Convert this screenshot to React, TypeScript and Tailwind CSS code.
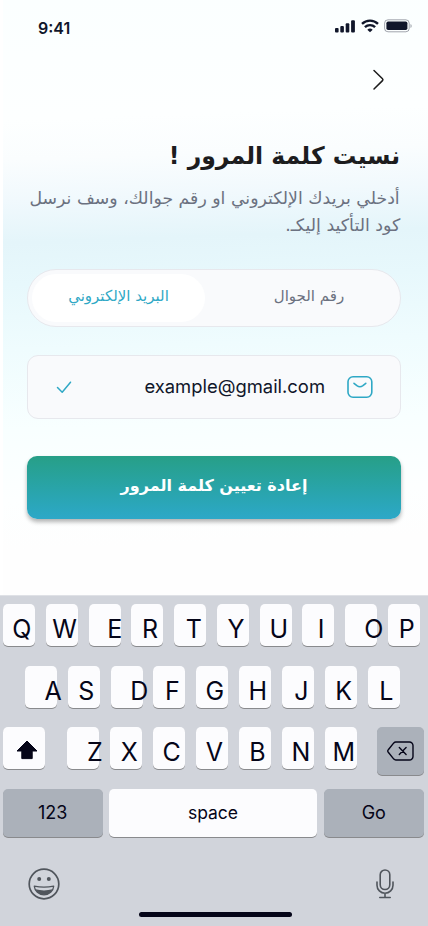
import React from "react";

type KeyDef = { label: string; inset: number };

const ROW_ONE: KeyDef[] = [
  { label: "Q", inset: 9.2 },
  { label: "W", inset: 6.5 },
  { label: "E", inset: 18.7 },
  { label: "R", inset: 10.7 },
  { label: "T", inset: 11.7 },
  { label: "Y", inset: 10.7 },
  { label: "U", inset: 10 },
  { label: "I", inset: 15.4 },
  { label: "O", inset: 19.2 },
  { label: "P", inset: 10.9 },
];

const ROW_TWO: KeyDef[] = [
  { label: "A", inset: 19.4 },
  { label: "S", inset: 10.5 },
  { label: "D", inset: 19.5 },
  { label: "F", inset: 11.5 },
  { label: "G", inset: 9.3 },
  { label: "H", inset: 9.5 },
  { label: "J", inset: 12.4 },
  { label: "K", inset: 10.5 },
  { label: "L", inset: 11.7 },
];

const ROW_THREE: KeyDef[] = [
  { label: "Z", inset: 19.9 },
  { label: "X", inset: 10.7 },
  { label: "C", inset: 9.6 },
  { label: "V", inset: 9.8 },
  { label: "B", inset: 10.3 },
  { label: "N", inset: 9.4 },
  { label: "M", inset: 7.4 },
];

function Key({ label, inset }: KeyDef) {
  return (
    <div
      className="h-[42px] w-8 rounded-[5px] bg-[#fcfcfe] pt-[8px] text-[25px] leading-[35px] whitespace-nowrap text-[#050518] shadow-[0_1px_0_#898a8d]"
      style={{ paddingLeft: inset }}
    >
      {label}
    </div>
  );
}

function StatusBar() {
  return (
    <div className="flex h-[55px] items-start justify-between pt-[19px] pr-[16px] pl-[38px]">
      <span className="text-[16px] leading-[18px] font-semibold text-[#10162a]">9:41</span>
      <div className="flex items-start gap-[6px]">
        <svg className="mt-[1px]" width="20" height="13" viewBox="0 0 20 13" fill="#10162a">
          <rect x="0" y="8" width="3.6" height="4.5" rx="1" />
          <rect x="5.3" y="6" width="3.6" height="6.5" rx="1" />
          <rect x="10.7" y="3.3" width="3.6" height="9.2" rx="1" />
          <rect x="16.1" y="0.3" width="3.8" height="12.2" rx="1" />
        </svg>
        <svg width="18" height="14" viewBox="0 0 18 14" fill="none" stroke="#10162a" strokeWidth="2.4">
          <path d="M1 4.9a11.5 11.5 0 0 1 16 0" />
          <path d="M3.9 8.200a7.400 7.400 0 0 1 10.200 0" />
          <path d="M9 13.300 6.300 10.700a4 4 0 0 1 5.400 0Z" fill="#10162a" stroke="none" />
        </svg>
        <svg className="-ml-[1px]" width="28" height="14" viewBox="0 0 28 14">
          <rect x="0.6" y="0.8" width="24.6" height="12" rx="3.4" fill="none" stroke="#10162a" strokeOpacity="0.38" />
          <rect x="2.4" y="2.6" width="21" height="8.4" rx="1.7" fill="#10162a" />
          <path d="M26.5 5v4q1.2-.7 1.2-2t-1.2-2Z" fill="#10162a" opacity="0.4" />
        </svg>
      </div>
    </div>
  );
}

function Keyboard() {
  return (
    <div className="mt-auto flex h-[331px] flex-col border-t border-[#dfe1e6] bg-[#d1d4db] pt-[8px]">
      <div className="flex justify-between pr-[8px] pl-[3px]">
        {ROW_ONE.map((k) => (
          <Key key={k.label} {...k} />
        ))}
      </div>
      <div className="mt-[19.5px] flex justify-between pr-[28.5px] pl-[25px]">
        {ROW_TWO.map((k) => (
          <Key key={k.label} {...k} />
        ))}
      </div>
      <div className="mt-[19.5px] flex h-[42px] pr-[4px] pl-[3px]">
        <div className="flex h-[42px] w-[42px] items-center justify-center rounded-[5px] bg-[#fcfcfe] shadow-[0_1px_0_#898a8d]">
          <svg className="mt-[4px] ml-[6px]" width="22" height="20" viewBox="0 0 22 20" fill="#050518" stroke="#050518" strokeWidth="1" strokeLinejoin="round">
            <path d="M11 1 21 11h-4.800v7.600H5.800V11H1Z" />
          </svg>
        </div>
        <div className="ml-[22px] flex w-[290px] justify-between">
          {ROW_THREE.map((k) => (
            <Key key={k.label} {...k} />
          ))}
        </div>
        <div className="ml-auto flex h-[48px] w-[47.5px] items-center justify-center rounded-[5px] bg-[#abb1ba] shadow-[0_1px_0_#898a8d]">
          <svg width="27" height="20" viewBox="0 0 27 20" fill="none" stroke="#050518" strokeWidth="1.4" strokeLinejoin="round" strokeLinecap="round">
            <path d="M8.8 1h13.6a3.6 3.6 0 0 1 3.6 3.6v10.800a3.600 3.600 0 0 1-3.600 3.600H8.800a3 3 0 0 1-2-.9L1.300 11.300a1.800 1.800 0 0 1 0-2.600L6.800 1.900a3 3 0 0 1 2-.9Z" />
            <path d="m12.300 6.600 6.800 6.800m0-6.800-6.800 6.800" />
          </svg>
        </div>
      </div>
      <div className="mt-5 flex justify-between pr-[4px] pl-[3px] text-[17.5px] leading-[48px] text-[#050518]">
        <div className="h-[48px] w-[99.5px] rounded-[5px] bg-[#abb1ba] text-center text-[18px] shadow-[0_1px_0_#898a8d]">123</div>
        <div className="h-[48px] w-[208px] rounded-[5px] bg-[#fcfcfe] text-center shadow-[0_1px_0_#898a8d]">space</div>
        <div className="h-[48px] w-[100.5px] rounded-[5px] bg-[#abb1ba] text-center text-[18px] shadow-[0_1px_0_#898a8d]">Go</div>
      </div>
      <div className="mt-[31px] flex items-start justify-between pr-[34px] pl-[28px]">
        <svg width="32" height="32" viewBox="0 0 32 32" fill="none" stroke="#50555c" strokeWidth="1.7">
          <circle cx="16" cy="16" r="14.8" />
          <circle cx="11.2" cy="11" r="2" fill="#50555c" stroke="none" />
          <circle cx="20.8" cy="11" r="2" fill="#50555c" stroke="none" />
          <path d="M6.3 18.2q9.7 2 19.4 0c-.4 4.8-4.4 8.6-9.7 8.6s-9.300-3.800-9.700-8.600Z" strokeWidth="1.300" strokeLinejoin="round" />
          <path d="M7.500 21.300q8.500 2.200 17 0c-1.300 3.600-4.500 5.500-8.500 5.500s-7.200-1.900-8.500-5.500Z" fill="#50555c" stroke="none" />
        </svg>
        <svg className="mt-[1px]" width="18" height="30" viewBox="0 0 18 30" fill="none" stroke="#50555c" strokeWidth="1.600" strokeLinecap="round">
          <rect x="4.200" y="1" width="9.600" height="19.500" rx="4.800" />
          <path d="M1 13v3.200a8 8 0 0 0 16 0V13M9 24.200v4M3.800 28.500h10.400" />
        </svg>
      </div>
      <div className="mt-auto mb-[9px] ml-[139px] h-[5.500px] w-[153px] rounded-full bg-[#050518]" />
    </div>
  );
}

export default function App() {
  return (
    <div className="flex h-[926px] w-[428px] flex-col overflow-hidden bg-[linear-gradient(90deg,white_3px,transparent_3px),linear-gradient(178deg,#fbffff_0px,#fdffff_120px,#fafdfe_160px,#f1f9fd_200px,#e4f5fa_243px,#e7f8fc_285px,#effcfe_350px,#f8ffff_430px,#fdffff_500px,#fefefe_550px)] font-['Inter','DejaVu_Sans',sans-serif]">
      <StatusBar />
      <div className="flex h-[50px] justify-end pt-[14px] pr-[42px]">
        <svg width="14" height="22" viewBox="0 0 14 22" fill="none" stroke="#1b1b1b" strokeWidth="1.500" strokeLinecap="round" strokeLinejoin="round">
          <path d="m2 1.500 8.500 8.300q.900.900 0 1.800L2 20" />
        </svg>
      </div>
      <div dir="rtl" className="mt-[34px] pr-[28px] font-['DejaVu_Sans',sans-serif]">
        <h1 className="h-[34px] w-max origin-right scale-x-[0.98] text-[24px] leading-[34px] font-bold whitespace-nowrap text-[#1c1c1e]">نسيت كلمة المرور !</h1>
        <div className="mt-[12px] text-[17px] leading-[27px] text-[#6b7180]">
          <p className="w-max origin-right scale-x-[1.018] whitespace-nowrap">أدخلي بريدك الإلكتروني او رقم جوالك، وسف نرسل</p>
          <p className="w-max origin-right scale-x-[1.025] whitespace-nowrap">كود التأكيد إليكـ.</p>
        </div>
      </div>
      <div dir="rtl" className="mx-[27px] mt-[30px] flex h-[58px] rounded-full border border-[#e7e8ed] bg-[#f9fafc] p-[4px] font-['DejaVu_Sans',sans-serif] text-[15px] leading-[44px] whitespace-nowrap">
        <div className="flex flex-1 justify-center pr-0 pl-[17px] text-[#6b7180]"><span>رقم الجوال</span></div>
        <div className="flex w-[173px] justify-center rounded-full bg-white text-[#2fa8c5]"><span>البريد الإلكتروني</span></div>
      </div>
      <div className="mx-[27px] mt-[28px] flex h-[64px] items-center rounded-[11px] border border-[#e7e8ed] bg-[#f9fafc] pr-[27px] pl-[28px]">
        <svg width="16" height="13" viewBox="0 0 16 13" fill="none" stroke="#2fa8c5" strokeWidth="1.500" strokeLinecap="round" strokeLinejoin="round">
          <path d="m1.500 6.500 4.700 4.700L14.500 1.200" />
        </svg>
        <span className="mb-px ml-auto text-[18.4px] text-[#10162a]">example@gmail.com</span>
        <svg className="ml-[22px]" width="26" height="22" viewBox="0 0 26 22" fill="none" stroke="#2fa8c5" strokeWidth="1.600" strokeLinecap="round">
          <rect x="1" y="0.800" width="23.800" height="20.400" rx="5" />
          <path d="m7 7.300 2.900 2.400q3 2.200 6 0L18.800 7.300" />
        </svg>
      </div>
      <button dir="rtl" className="mx-[27px] mt-[36.500px] flex h-[63.500px] justify-center rounded-[10px] bg-linear-to-b from-[#279f87] to-[#2da8c8] font-['DejaVu_Sans',sans-serif] text-[16px] leading-[60px] font-bold whitespace-nowrap text-white shadow-[0_3px_4px_rgba(0,0,0,0.3)]">
        <span>إعادة تعيين كلمة المرور</span>
      </button>
      <Keyboard />
    </div>
  );
}
